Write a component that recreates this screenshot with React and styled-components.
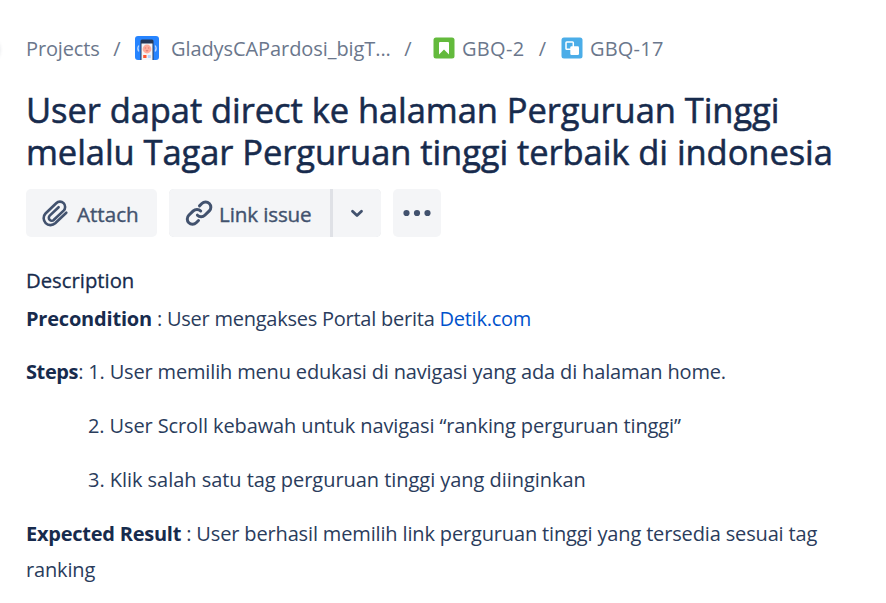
import React from "react";
import styled, { createGlobalStyle } from "styled-components";

const GlobalStyle = createGlobalStyle`
  body {
    margin: 0;
    background: #ffffff;
    color: #172b4d;
    font-family: "Open Sans", "Noto Sans", sans-serif;
    font-size: 20px;
  }
`;

const Page = styled.main`
  position: relative;
  box-sizing: border-box;
  width: 886px;
  height: 603px;
  overflow: hidden;
  padding: 30px 26px 0;
`;

/* Edge of the round sidebar toggle, which floats over the left border. */
const SidebarToggle = styled.div`
  position: absolute;
  top: 37px;
  left: -25px;
  width: 24px;
  height: 24px;
  border-radius: 50%;
  background: #ffffff;
  box-shadow: 0 1px 4px rgba(9, 30, 66, 0.2);
`;

const Breadcrumbs = styled.nav`
  display: flex;
  align-items: center;
  height: 36px;
  color: #6b778c;
  white-space: pre;
`;

const Crumb = styled.a`
  display: flex;
  align-items: center;
  gap: ${(p) => p.$gap || 0}px;
  width: ${(p) => p.$width}px;
  letter-spacing: ${(p) => p.$spacing || 0}px;

  svg {
    flex: none;
    margin-bottom: 1px;
  }
`;

const Separator = styled.span`
  width: ${(p) => p.$width}px;
  padding-right: ${(p) => p.$after || 0}px;
  text-align: center;
`;

const Title = styled.h1`
  margin: 23px 0 0;
  font-size: 34.5px;
  font-weight: 500;
  line-height: 42px;
  letter-spacing: -0.07px;
  white-space: nowrap;
  -webkit-text-stroke: 0.55px currentColor;
`;

const Toolbar = styled.div`
  display: flex;
  gap: 12px;
  margin-top: 16px;
`;

const SplitButton = styled.div`
  display: flex;
  gap: 3px;
  border-radius: 5px;
  background: #dfe1e6;
`;

const Button = styled.button`
  display: flex;
  align-items: center;
  box-sizing: border-box;
  width: ${(p) => p.$width}px;
  height: 48px;
  padding: 2px 0 0 ${(p) => p.$inset}px;
  gap: ${(p) => p.$gap || 0}px;
  border: 0;
  border-radius: ${(p) => p.$radius || "5px"};
  background: #f4f5f7;
  color: #42526e;
  font: 500 20.6px "Open Sans", "Noto Sans", sans-serif;
  letter-spacing: ${(p) => p.$spacing || 0}px;
  white-space: nowrap;
  -webkit-text-stroke: 0.4px currentColor;

  svg {
    flex: none;
    margin-top: -3px;
  }
`;

const SectionTitle = styled.h2`
  margin: 27px 0 0;
  font-size: 20.3px;
  font-weight: 500;
  line-height: 32px;
  -webkit-text-stroke: 0.3px currentColor;
`;

const Body = styled.div`
  margin-top: 5px;
  color: #2a3c5c;
  line-height: 36px;
`;

const Paragraph = styled.p`
  margin: 0 0 ${(p) => p.$after ?? 18}px;
  padding-left: ${(p) => p.$indent || 0}px;
  white-space: nowrap;
  letter-spacing: ${(p) => p.$spacing}px;
`;

const Label = styled.strong`
  color: #172b4d;
  font-weight: 700;
  letter-spacing: ${(p) => p.$spacing}px;
`;

const Link = styled.a`
  color: #0052cc;
  letter-spacing: -0.25px;
`;

const ProjectAvatar = () => (
  <svg width="24" height="24" viewBox="0 0 24 24">
    <rect width="24" height="24" rx="3" fill="#2684ff" />
    <path d="M3.8 9.5Q1.8 12.5 3.8 15.5M20.2 9.5Q22.2 12.5 20.2 15.5" fill="none" stroke="#b3d4ff" strokeWidth="1.3" />
    <path d="M5.500 24V5q0-1.500 1.500-1.500h10q1.500 0 1.500 1.500v19z" fill="#253858" />
    <path d="M6.500 7.500h11V24h-11z" fill="#f4f5f7" />
    <circle cx="12" cy="13" r="4.4" fill="#ffac9b" />
    <path d="M9.8 12h1M13.200 12h1M10.800 14.500q1.200 1 2.400 0" fill="none" stroke="#d0605a" strokeWidth=".8" />
    <path d="M8.2 19h3.300v3H8.200z" fill="#ff5630" />
    <path d="M12.800 19h3v3h-3z" fill="#b3d4ff" />
  </svg>
);

const StoryIcon = () => (
  <svg width="22" height="22" viewBox="0 0 22 22">
    <rect x=".5" y=".5" width="21" height="21" rx="2.5" fill="#63ba3c" />
    <path d="M7 5h8q1 0 1 1v11.500l-5-5-5 5V6q0-1 1-1z" fill="#fff" />
  </svg>
);

const SubtaskIcon = () => (
  <svg width="22" height="22" viewBox="0 0 22 22">
    <rect x=".5" y=".5" width="21" height="21" rx="2.5" fill="#4bade8" />
    <rect x="5" y="4.9" width="7.3" height="7.3" rx=".8" fill="none" stroke="#fff" strokeWidth="1.500" />
    <rect x="9.3" y="9.3" width="8.7" height="8.7" rx="1.300" fill="#fff" />
  </svg>
);

const AttachIcon = () => (
  <svg width="28" height="28" viewBox="0 0 28 28" fill="none" stroke="currentColor" strokeWidth="2.6" strokeLinecap="round" strokeLinejoin="round">
    <path d="M25.3 13.700 14.200 24.300a6.900 6.900 0 0 1-9.700-9.800L15.200 4.200a5.200 5.200 0 0 1 7.400 7.400L12.900 20.800a2.900 2.900 0 0 1-4.200-4.200l8.900-8.400" />
  </svg>
);

const LinkIcon = () => (
  <svg width="28" height="28" viewBox="0 0 28 28" fill="none" stroke="currentColor" strokeWidth="3" strokeLinecap="round">
    <path d="m14.500 6.900 2.400-2.400a5.200 5.200 0 0 1 7.400 7.400l-4.500 4.400a5.200 5.200 0 0 1-7.400-.1" />
    <path d="m13.500 21.500-2.300 2.200a5.200 5.200 0 0 1-7.400-7.400l4.500-4.400a5.200 5.200 0 0 1 7.400.1" />
  </svg>
);

const ChevronIcon = () => (
  <svg width="14" height="10" viewBox="0 0 14 10" fill="none" stroke="currentColor" strokeWidth="2.800" strokeLinecap="round" strokeLinejoin="round">
    <path d="m2.500 3.200 4.500 4.300 4.500-4.300" />
  </svg>
);

const MoreIcon = () => (
  <svg width="28" height="8" viewBox="0 0 28 8" fill="currentColor">
    <circle cx="3.500" cy="4" r="3.100" />
    <circle cx="14" cy="4" r="3.100" />
    <circle cx="24.500" cy="4" r="3.100" />
  </svg>
);

export default function App() {
  return (
    <>
      <GlobalStyle />
      <Page>
        <SidebarToggle />
        <Breadcrumbs>
          <Crumb $width={73} $spacing={-0.15}>Projects</Crumb>
          <Separator $width={36}>/</Separator>
          <Crumb $width={256} $gap={12} $spacing={-0.08}>
            <ProjectAvatar />
            GladysCAPardosi_bigT...
          </Crumb>
          <Separator $width={34} $after={8}>/</Separator>
          <Crumb $width={91} $gap={7} $spacing={0.3}>
            <StoryIcon />
            GBQ-2
          </Crumb>
          <Separator $width={37}>/</Separator>
          <Crumb $width={110} $gap={7} $spacing={0.2}>
            <SubtaskIcon />
            GBQ-17
          </Crumb>
        </Breadcrumbs>

        <Title>
          User dapat direct ke halaman Perguruan Tinggi
          <br />
          melalu Tagar Perguruan tinggi terbaik di indonesia
        </Title>

        <Toolbar>
          <Button $width={131} $inset={15} $gap={8}>
            <AttachIcon />
            Attach
          </Button>
          <SplitButton>
            <Button $width={161} $inset={16} $gap={6} $spacing={-0.12} $radius="5px 0 0 5px">
              <LinkIcon />
              Link issue
            </Button>
            <Button $width={48} $inset={17} $radius="0 5px 5px 0" aria-label="Link options">
              <ChevronIcon />
            </Button>
          </SplitButton>
          <Button $width={48} $inset={10} aria-label="More actions">
            <MoreIcon />
          </Button>
        </Toolbar>

        <SectionTitle>Description</SectionTitle>
        <Body>
          <Paragraph $spacing={-0.24} $after={17}>
            <Label $spacing={-0.2}>Precondition</Label> : User mengakses Portal berita <Link>Detik.com</Link>
          </Paragraph>
          <Paragraph $spacing={-0.16}>
            <Label $spacing={-0.4}>Steps</Label>: 1. User memilih menu edukasi di navigasi yang ada di halaman home.
          </Paragraph>
          <Paragraph $spacing={-0.11} $indent={62}>
            2. User Scroll kebawah untuk navigasi “ranking perguruan tinggi”
          </Paragraph>
          <Paragraph $spacing={-0.04} $indent={62}>
            3. Klik salah satu tag perguruan tinggi yang diinginkan
          </Paragraph>
          <Paragraph $spacing={-0.15}>
            <Label $spacing={-0.24}>Expected Result</Label> : User berhasil memilih link perguruan tinggi yang tersedia sesuai tag
            <br />
            ranking
          </Paragraph>
        </Body>
      </Page>
    </>
  );
}
